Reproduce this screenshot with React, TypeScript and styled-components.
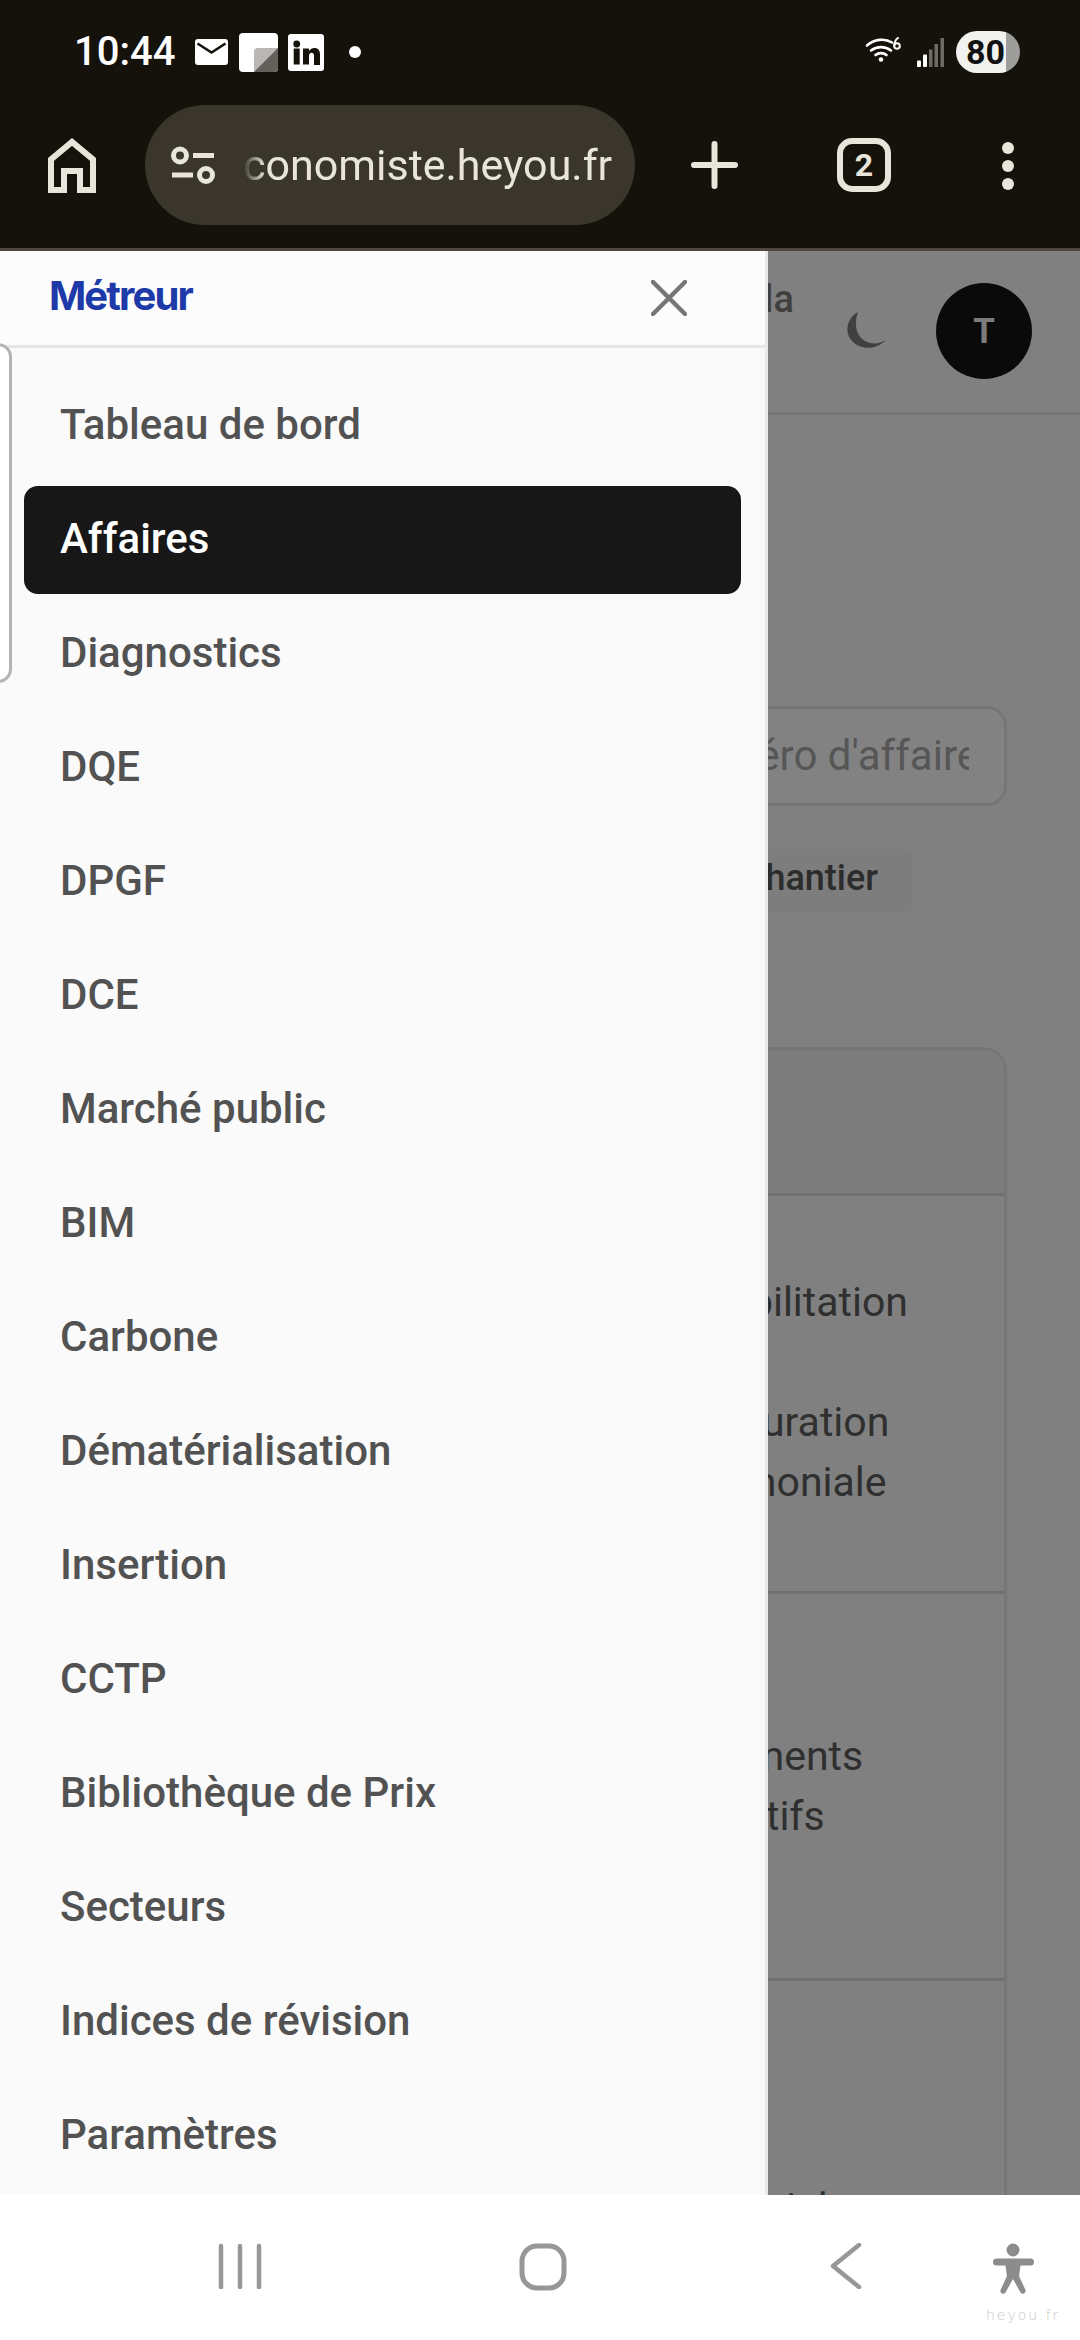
import React from "react";
import styled, { createGlobalStyle } from "styled-components";

const Global = createGlobalStyle`
  html, body { margin: 0; padding: 0; background: #fff; }
  * { box-sizing: border-box; }
  #root { width: 1080px; height: 2340px; overflow: hidden; }
`;

const Screen = styled.div`
  position: relative;
  width: 1080px;
  height: 2340px;
  display: flex;
  flex-direction: column;
  font-family: Roboto, "Liberation Sans", sans-serif;
  overflow: hidden;
`;

const Chrome = styled.header`
  height: 251px;
  flex: none;
  background: #14120a;
  border-bottom: 3px solid #4d473c;
  display: flex;
  flex-direction: column;
`;

const StatusBar = styled.div`
  height: 105px;
  padding: 31px 60px 0 74px;
  display: flex;
  align-items: flex-start;
  color: #fff;
`;

const Time = styled.span`
  font: 500 40px/42px Roboto, sans-serif;
  width: 121px;
`;

const StatusIcons = styled.div`
  display: flex;
  align-items: center;
  height: 42px;
  gap: 10px;
`;

const NotifDot = styled.span`
  width: 12px;
  height: 12px;
  border-radius: 50%;
  background: #fff;
  margin-left: 15px;
`;

const Spacer = styled.div`
  flex: 1;
`;

const SystemIcons = styled.div`
  display: flex;
  align-items: center;
  height: 42px;
  gap: 12px;
`;

const WifiSlot = styled.div`
  display: flex;
  margin-right: 4px;
`;

const Battery = styled.div`
  width: 64px;
  height: 42px;
  border-radius: 21px;
  background: linear-gradient(90deg, #f1f1ef 0 50px, #9d9d9b 50px);
  color: #111;
  font: 700 34px/42px Roboto, sans-serif;
  display: flex;
  align-items: center;
  justify-content: center;
  padding-right: 5px;
`;

const Toolbar = styled.div`
  flex: 1;
  display: flex;
  align-items: flex-start;
  padding-left: 48px;
  color: #e9e5db;
`;

const Pill = styled.div`
  width: 490px;
  height: 120px;
  margin-left: 49px;
  border-radius: 60px;
  background: #3a362b;
  display: flex;
  align-items: center;
  padding-left: 25px;
`;

const UrlText = styled.span`
  margin-left: 27px;
  font: 400 43px/48px Roboto, sans-serif;
  color: #e9e5db;
  white-space: nowrap;
  -webkit-mask-image: linear-gradient(90deg, transparent 0, #000 22px);
  mask-image: linear-gradient(90deg, transparent 0, #000 22px);
`;

const ToolSlot = styled.div<{ $ml: number; $mt?: number }>`
  margin-left: ${(p) => p.$ml}px;
  margin-top: ${(p) => p.$mt ?? 33}px;
  display: flex;
`;

const HomeSlot = styled.div`
  margin-top: 33px;
  display: flex;
`;

const TabBox = styled.div`
  width: 54px;
  height: 54px;
  border: 6px solid #e9e5db;
  border-radius: 15px;
  display: flex;
  align-items: center;
  justify-content: center;
  font: 700 32px/1 Roboto, sans-serif;
  color: #e9e5db;
`;

const Dots = styled.div`
  display: flex;
  flex-direction: column;
  gap: 6px;
  padding-top: 4px;
`;

const Dot = styled.span`
  width: 12px;
  height: 12px;
  border-radius: 50%;
  background: #e9e5db;
`;

const Viewport = styled.div`
  flex: 1;
  position: relative;
  overflow: hidden;
  background: #808080;
`;

const PageHeader = styled.div`
  height: 164px;
  border-bottom: 3px solid #747474;
  display: flex;
  align-items: flex-start;
  padding: 23px 48px 0 620px;
`;

const Brand = styled.span`
  width: 174px;
  text-align: right;
  font: 500 38px/50px Roboto, sans-serif;
  color: #404040;
`;

const Moon = styled.div`
  margin: 38px 0 0 53px;
  display: flex;
`;

const Avatar = styled.div`
  width: 96px;
  height: 96px;
  margin: 9px 0 0 49px;
  border-radius: 50%;
  background: #0a0a0a;
  color: #7c7c7c;
  display: flex;
  align-items: center;
  justify-content: center;
  font: 700 35px/1 Roboto, sans-serif;
`;

const PageBody = styled.div`
  padding: 291px 73px 0 0;
  display: flex;
  flex-direction: column;
  align-items: flex-end;
`;

const SearchBox = styled.div`
  width: 600px;
  height: 100px;
  border: 3px solid #767676;
  border-radius: 20px;
  background: #828282;
  display: flex;
  align-items: center;
  justify-content: flex-end;
  padding-right: 35px;
`;

const SearchClip = styled.div`
  width: 400px;
  overflow: hidden;
  display: flex;
  justify-content: flex-end;
`;

const SearchText = styled.span`
  flex: none;
  margin-right: -10px;
  white-space: nowrap;
  font: 400 42px/50px Roboto, sans-serif;
  color: #565656;
`;

const ChipRow = styled.div`
  align-self: stretch;
  margin-top: 43px;
  margin-left: 500px;
  display: flex;
`;

const Chip = styled.div`
  height: 63px;
  width: 412px;
  background: #7d7d7d;
  border-radius: 6px;
  padding-right: 34px;
  text-align: right;
  font: 500 36px/58px Roboto, sans-serif;
  color: #2c2c2c;
`;

const Card = styled.section`
  width: 600px;
  margin-top: 135px;
  border: 3px solid #767676;
  border-radius: 24px 24px 0 0;
  border-bottom: 0;
`;

const CardHead = styled.div`
  height: 146px;
  background: #7d7d7d;
  border-radius: 22px 22px 0 0;
  border-bottom: 3px solid #707070;
`;

const Row = styled.div<{ $h: number; $pt: number }>`
  height: ${(p) => p.$h}px;
  padding: ${(p) => p.$pt}px 0 0 248px;
  border-bottom: 3px solid #707070;
  font: 400 41px/60px Roboto, sans-serif;
  color: #2f2f2f;
  display: flex;
  flex-direction: column;
`;

const Gap = styled.div`
  height: 60px;
`;

const Drawer = styled.aside`
  position: absolute;
  left: 0;
  top: 0;
  bottom: 0;
  width: 768px;
  background: #fafafa;
  border-right: 3px solid #e8e8e8;
`;

const DrawerHead = styled.div`
  height: 97px;
  background: #fcfcfd;
  border-bottom: 3px solid #e6e6e6;
  padding: 0 78px 0 49px;
  display: flex;
  align-items: center;
  justify-content: space-between;
`;

const DrawerTitle = styled.h1`
  margin: 0;
  padding-bottom: 5px;
  font: 700 40px/50px Inter, Roboto, sans-serif;
  letter-spacing: -1.9px;
  color: #1e3aa8;
`;

const Nav = styled.nav`
  padding: 24px 24px 0;
  display: flex;
  flex-direction: column;
  gap: 6px;
`;

const NavItem = styled.a<{ $active?: boolean }>`
  height: 108px;
  border-radius: 14px;
  padding: 0 0 3px 36px;
  display: flex;
  align-items: center;
  font: 500 42px/50px Roboto, sans-serif;
  color: ${(p) => (p.$active ? "#fff" : "#525252")};
  background: ${(p) => (p.$active ? "#171717" : "transparent")};
`;

const EdgeTab = styled.div`
  position: absolute;
  left: -20px;
  top: 92px;
  width: 32px;
  height: 340px;
  background: #fff;
  border: 3px solid #b4b4b4;
  border-radius: 14px;
`;

const NavBar = styled.footer`
  height: 145px;
  flex: none;
  background: #fff;
  display: flex;
  align-items: flex-start;
  padding: 48px 0 0 217px;
  position: relative;
`;

const NavIcon = styled.div<{ $ml: number }>`
  margin-left: ${(p) => p.$ml}px;
  display: flex;
`;

const Watermark = styled.span`
  position: absolute;
  left: 986px;
  top: 112px;
  font: 300 14px/16px "DejaVu Sans", sans-serif;
  letter-spacing: 2px;
  color: #c8c8c8;
`;

const items = [
  "Tableau de bord", "Affaires", "Diagnostics", "DQE", "DPGF", "DCE", "Marché public", "BIM",
  "Carbone", "Dématérialisation", "Insertion", "CCTP", "Bibliothèque de Prix", "Secteurs",
  "Indices de révision", "Paramètres",
];

export default function App() {
  return (
    <Screen>
      <Global />
      <Chrome>
        <StatusBar>
          <Time>10:44</Time>
          <StatusIcons>
            <svg width="33" height="26" viewBox="0 0 33 26">
              <rect width="33" height="26" rx="3" fill="#fff" />
              <path d="M2.500 4.500l14 9 14-9" fill="none" stroke="#14120a" strokeWidth="2.600" />
            </svg>
            <svg width="39" height="39" viewBox="0 0 39 39" style={{ marginLeft: 1 }}>
              <rect width="39" height="39" rx="4" fill="#fff" />
              <path d="M15 39V19a4 4 0 0 1 4-4h20v20a4 4 0 0 1-4 4z" fill="#b9b8b4" />
              <path d="M15 39L39 15v20a4 4 0 0 1-4 4z" fill="#62615c" />
            </svg>
            <svg width="36" height="37" viewBox="0 0 36 37">
              <rect width="36" height="37" rx="3" fill="#fff" />
              <circle cx="8.700" cy="10" r="3.400" fill="#14120a" />
              <rect x="5.700" y="14.500" width="6" height="16" fill="#14120a" />
              <path d="M15 14.500h6v2.500c1.300-2 3.200-3 5.400-3 3.800 0 5.600 2.400 5.600 6.600v10.400h-6V21.500c0-1.800-.8-2.800-2.500-2.800S21 20 21 22v8.500h-6z" fill="#14120a" />
            </svg>
            <NotifDot />
          </StatusIcons>
          <Spacer />
          <SystemIcons>
            <WifiSlot>
              <svg width="36" height="30" viewBox="0 0 36 30" fill="none" stroke="#fff" strokeWidth="2.600" strokeLinecap="round">
                <path d="M2 8.500C9 2 20 1 27 5.500M6 13.500c6-4.500 14-4.500 20 0M10.500 18c3-2.500 8-2.500 11 0" />
                <circle cx="16" cy="22.500" r="2.300" fill="#fff" stroke="none" />
                <circle cx="32" cy="9" r="2.800" strokeWidth="2" />
                <path d="M29.200 8.500C29.500 5 30.500 2.500 33 1" strokeWidth="2" />
              </svg>
            </WifiSlot>
            <svg width="27" height="29" viewBox="0 0 27 29">
              <rect x="0" y="22.500" width="4" height="6.500" rx="1" fill="#fff" />
              <rect x="6" y="16.500" width="4" height="12.500" rx="1" fill="#fff" />
              <rect x="12" y="11.500" width="3.500" height="17.500" fill="#6d6b64" />
              <rect x="17.500" y="6" width="3.500" height="23" fill="#6d6b64" />
              <rect x="23.500" y="0" width="3.500" height="29" fill="#6d6b64" />
            </svg>
            <Battery>80</Battery>
          </SystemIcons>
        </StatusBar>
        <Toolbar>
          <HomeSlot>
            <svg width="48" height="55" viewBox="0 0 48 55" fill="none" stroke="#e9e5db" strokeWidth="6">
              <path d="M3 52V21.500L24 4 45 21.500V52H32V33H16v19z" />
            </svg>
          </HomeSlot>
          <Pill>
            <svg width="46" height="38" viewBox="0 0 46 38" fill="none" stroke="#e9e5db" strokeWidth="5">
              <circle cx="10" cy="9.500" r="6.500" />
              <path d="M23 9.500h21M2 29h21" />
              <circle cx="36" cy="29" r="6.500" />
            </svg>
            <UrlText>conomiste.heyou.fr</UrlText>
          </Pill>
          <ToolSlot $ml={56} $mt={36}>
            <svg width="47" height="48" viewBox="0 0 47 48" fill="none" stroke="#e9e5db" strokeWidth="6" strokeLinecap="round">
              <path d="M23.500 3v42M3 24h41" />
            </svg>
          </ToolSlot>
          <ToolSlot $ml={99}>
            <TabBox>2</TabBox>
          </ToolSlot>
          <ToolSlot $ml={111}>
            <Dots>
              <Dot />
              <Dot />
              <Dot />
            </Dots>
          </ToolSlot>
        </Toolbar>
      </Chrome>
      <Viewport>
        <PageHeader>
          <Brand>la</Brand>
          <Moon>
            <svg width="40" height="38" viewBox="0 0 40 38">
              <path d="M11 0C2 5-1 14 1 22c3 12 23 21 38 6-11 7-25 3-29-9-2-7-1-13 1-19z" fill="#404040" />
            </svg>
          </Moon>
          <Avatar>T</Avatar>
        </PageHeader>
        <PageBody>
          <SearchBox>
            <SearchClip>
              <SearchText>Numéro d'affaire</SearchText>
            </SearchClip>
          </SearchBox>
          <ChipRow>
            <Chip>hantier</Chip>
          </ChipRow>
          <Card>
            <CardHead />
            <Row $h={398} $pt={76}>
              <span>Réhabilitation</span>
              <Gap />
              <span>Restauration</span>
              <span>patrimoniale</span>
            </Row>
            <Row $h={387} $pt={132}>
              <span>Logements</span>
              <span>collectifs</span>
            </Row>
            <Row $h={400} $pt={197}>
              <span>Industriel</span>
            </Row>
          </Card>
        </PageBody>
        <Drawer>
          <DrawerHead>
            <DrawerTitle>Métreur</DrawerTitle>
            <svg width="36" height="36" viewBox="0 0 36 36" fill="none" stroke="#767676" strokeWidth="4.500" strokeLinecap="round">
              <path d="M2 2l32 32M34 2L2 34" />
            </svg>
          </DrawerHead>
          <Nav>
            {items.map((t) => (
              <NavItem key={t} $active={t === "Affaires"}>{t}</NavItem>
            ))}
          </Nav>
          <EdgeTab />
        </Drawer>
      </Viewport>
      <NavBar>
        <NavIcon $ml={0}>
          <svg width="46" height="46" viewBox="0 0 46 46" fill="none" stroke="#979797" strokeWidth="4.500" strokeLinecap="round">
            <path d="M4 3v41M23 3v41M42 3v41" />
          </svg>
        </NavIcon>
        <NavIcon $ml={256}>
          <svg width="48" height="48" viewBox="0 0 48 48" fill="none" stroke="#979797" strokeWidth="5">
            <rect x="3" y="3" width="42" height="42" rx="15" />
          </svg>
        </NavIcon>
        <NavIcon $ml={263}>
          <svg width="32" height="46" viewBox="0 0 32 46" fill="none" stroke="#979797" strokeWidth="4.500" strokeLinecap="round" strokeLinejoin="round">
            <path d="M29 2L3 23l26 21" />
          </svg>
        </NavIcon>
        <NavIcon $ml={130}>
          <svg width="43" height="52" viewBox="0 0 43 52" fill="#8c8c8c">
            <circle cx="21" cy="7" r="6.500" />
            <rect x="1" y="15.500" width="41" height="7" rx="3.500" />
            <path d="M13 20h16l-2 13 6.500 14a2.800 2.800 0 0 1-5 2.400L21 36l-7.500 13.400a2.800 2.800 0 0 1-5-2.400L15 33z" />
          </svg>
        </NavIcon>
        <Watermark>heyou.fr</Watermark>
      </NavBar>
    </Screen>
  );
}
